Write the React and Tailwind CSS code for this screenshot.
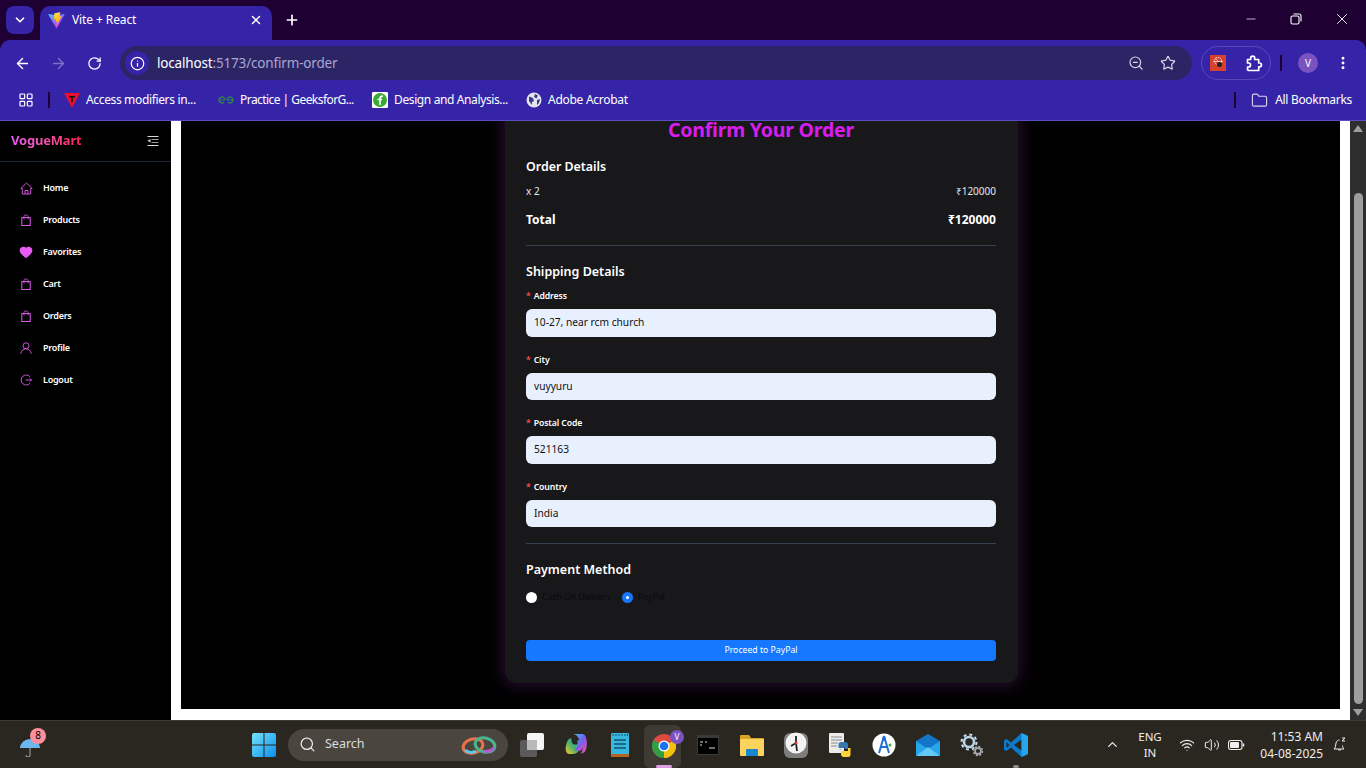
import React from "react";
import { ArrowLeft, ArrowRight, RotateCw, ZoomOut, Star, MoreVertical, ChevronDown, X, Plus, Minus, LayoutGrid, Folder, Info, Heart, Search, ChevronUp, Wifi, Volume2 } from "lucide-react";

const F = { fontFamily: '"Noto Sans", sans-serif' };

function ViteLogo() {
  return (
    <svg width="17" height="17" viewBox="0 0 410 404">
      <defs>
        <linearGradient id="va" x1="6" y1="33" x2="235" y2="344" gradientUnits="userSpaceOnUse">
          <stop stopColor="#41D1FF" />
          <stop offset="1" stopColor="#BD34FE" />
        </linearGradient>
        <linearGradient id="vb" x1="194" y1="8" x2="236" y2="292" gradientUnits="userSpaceOnUse">
          <stop stopColor="#FFEA83" />
          <stop offset=".08" stopColor="#FFDD35" />
          <stop offset="1" stopColor="#FFA800" />
        </linearGradient>
      </defs>
      <path fill="url(#va)" d="M399.6 59.5 215 389.6c-3.8 6.8-13.6 6.9-17.5.1L9.3 59.5C5.1 52.1 11.4 43.2 19.8 44.7l184.8 33c1.2.2 2.4.2 3.6 0l180.9-33c8.3-1.5 14.7 7.3 10.5 14.8Z" />
      <path fill="url(#vb)" d="M292.9 1.6 156.3 28.4c-2.2.4-3.9 2.3-4 4.6l-8.4 142.2c-.2 3.4 2.9 5.9 6.2 5.2l38-8.8c3.6-.8 6.8 2.3 6.1 5.9l-11.3 55.3c-.8 3.7 2.7 6.9 6.3 5.8l23.5-7.1c3.6-1.1 7.1 2.1 6.3 5.8l-18 87.1c-1.1 5.4 6.1 8.4 9.1 3.7l2-3.1 111.4-222.3c1.9-3.7-1.3-8-5.4-7.2l-39.2 7.6c-3.7.7-6.8-2.7-5.8-6.3l25.6-88.7c1-3.6-2.1-7.1-5.8-6.3Z" />
    </svg>
  );
}

function Bookmark({ icon, label, w, text }) {
  return (
    <div className="flex items-center" style={{ width: w }}>
      <div className="w-4 h-4 flex items-center justify-center mr-[6px]">{icon}</div>
      <span className={text}>{label}</span>
    </div>
  );
}

function Chrome() {
  return (
    <div className="shrink-0 bg-[#1f0033]" style={F}>
      <div className="h-10 flex items-end relative">
        <div className="absolute left-[6px] top-[6px] w-7 h-7 rounded-lg bg-[#3524a8] flex items-center justify-center">
          <ChevronDown size={14} strokeWidth={3} className="text-white" />
        </div>
        <div className="ml-10 w-[232px] h-[34px] rounded-t-[10px] bg-[#3524a8] flex items-center pl-2 pr-2 pb-[6px]">
          <ViteLogo />
          <span className="ml-[7px] text-[12px] text-white tracking-[-0.1px]">Vite + React</span>
          <X size={14} strokeWidth={2.5} className="ml-auto mr-[1px] text-white" />
        </div>
        <Plus size={16} strokeWidth={2.5} className="ml-3 mb-3 text-white" />
        <div className="ml-auto flex items-center h-full pr-[15px] pb-[2px] text-white">
          <Minus size={14} strokeWidth={1.2} className="mr-[-1px]" />
          <svg className="ml-[32px]" width="14" height="14" viewBox="0 0 14 14" fill="none" stroke="#fff" strokeWidth="1.1">
            <rect x="2" y="4" width="8" height="8" rx="1.5" />
            <path d="M4.5 2h5.5A2 2 0 0 1 12 4v5.5" />
          </svg>
          <X size={18} strokeWidth={1.2} className="ml-[30px]" />
        </div>
      </div>

      <div className="h-10 bg-[#3524a8] rounded-t-[10px] flex items-center">
        <div className="w-[120px] mt-[6px] flex items-center shrink-0 pl-[14px] text-white">
          <ArrowLeft size={17} strokeWidth={2} />
          <ArrowRight size={17} strokeWidth={2} className="ml-[19px] text-[#7b70c4]" />
          <RotateCw size={15} strokeWidth={2} className="ml-[20px]" />
        </div>
        <div className="w-[1072px] h-[34px] mt-[6px] rounded-full bg-[#2b2566] flex items-center pl-[5px] pr-[16px] shrink-0">
          <div className="w-6 h-6 rounded-full bg-[#3524a8] flex items-center justify-center">
            <Info size={15} className="text-white" strokeWidth={2} />
          </div>
          <span className="ml-2 text-[13.5px] tracking-[-0.17px] text-white">localhost<span className="text-[#aaa6cf]">:5173/confirm-order</span></span>
          <ZoomOut size={16} className="ml-auto text-[#d5d3e8]" strokeWidth={1.8} />
          <Star size={16} className="ml-4 text-[#d5d3e8]" strokeWidth={1.8} />
        </div>
        <div className="ml-[9px] mt-[6px] w-[70px] h-[34px] rounded-full border border-[#5548b8] flex items-center pl-2 shrink-0">
          <svg width="16" height="16" viewBox="0 0 16 16">
            <rect width="16" height="16" fill="#d8402f" />
            <circle cx="8" cy="6" r="3.500" fill="none" stroke="#fff" strokeWidth="0.9" strokeDasharray="1.500 0.800" />
            <path d="M3 6.500h10M5 3 11 9" stroke="#fff" strokeWidth="0.6" />
            <circle cx="9.500" cy="9.500" r="2.500" fill="#222" />
          </svg>
          <svg className="ml-[20px]" width="17" height="17" viewBox="0 0 17 17" fill="none" stroke="#fff" strokeWidth="1.700" strokeLinejoin="round">
            <path d="M1.500 4.500h3.200V3.200a2 2 0 0 1 4 0v1.300h4v3.500h.8a1.900 1.900 0 0 1 0 3.800h-.8v3.700H2.500l-1-.900V12h1a2 2 0 0 0 0-4h-1Z" />
          </svg>
        </div>
        <div className="ml-[9px] mt-[6px] w-[2px] h-4 bg-[#1f0033]" />
        <div className="ml-[16px] mt-[6px] w-5 h-5 rounded-full bg-[#7a53c0] flex items-center justify-center text-[10px] text-white">V</div>
        <MoreVertical size={16} strokeWidth={2.4} className="ml-[17px] mt-[6px] text-white" />
      </div>

      <div className="h-[41px] bg-[#3524a8] border-b border-[#5a4fc0] flex items-center pl-[18px]">
        <LayoutGrid size={16} className="text-white" strokeWidth={1.8} />
        <div className="ml-[14px] w-[2px] h-4 bg-[#1f0033]" />
        <div className="ml-[14px] flex items-center">
          <Bookmark
            w="154px"
            text="text-[12px] text-white whitespace-nowrap tracking-[-0.35px]"
            label="Access modifiers in..."
            icon={
              <svg width="16" height="16" viewBox="0 0 16 16">
                <path d="M0 1h16L8 16Z" fill="#e8112d" />
                <path d="M5 4h6v1.5H8.8V10H7.2V5.5H5Z" fill="#111" />
              </svg>
            }
          />
          <Bookmark
            w="154px"
            text="text-[12px] text-white whitespace-nowrap tracking-[-0.55px]"
            label="Practice | GeeksforG..."
            icon={
              <svg width="16" height="10" viewBox="0 0 16 10" fill="none" stroke="#2f8d46" strokeWidth="1.2">
                <path d="M1 5h6M9 5h6M7 5a3 3 0 1 0-1 2.2M9 5a3 3 0 1 1 1 2.2" />
              </svg>
            }
          />
          <Bookmark
            w="155px"
            text="text-[12px] text-white whitespace-nowrap tracking-[-0.38px]"
            label="Design and Analysis..."
            icon={
              <svg width="16" height="16" viewBox="0 0 16 16">
                <rect width="16" height="16" rx="1" fill="#fff" />
                <circle cx="8" cy="8" r="7" fill="#3aa935" />
                <path d="M8 13V6.5c0-2 1-2.5 3-2.5M5.5 7.5h4.5" stroke="#fff" strokeWidth="1.6" fill="none" />
              </svg>
            }
          />
          <Bookmark
            w="130px"
            text="text-[12px] text-white whitespace-nowrap tracking-[-0.28px] ml-[-1px]"
            label="Adobe Acrobat"
            icon={
              <svg width="16" height="16" viewBox="0 0 16 16" className="ml-[-2px]">
                <circle cx="8" cy="8" r="7.5" fill="#e4e4ee" />
                <path d="M3 4.5 7 6l1 3-2 1v3L3 9ZM9 2l3 1.500-1.500 3L8 5ZM11 8l3-1-1 4-2 2Z" fill="#3a3a8c" />
              </svg>
            }
          />
        </div>
        <div className="ml-auto flex items-center pr-[14px]">
          <div className="w-[2px] h-4 bg-[#1f0033]" />
          <Folder size={17} className="ml-[15px] text-[#d5d3e8]" strokeWidth={1.6} />
          <span className="ml-[7px] text-[12px] text-white tracking-[-0.3px]">All Bookmarks</span>
        </div>
      </div>
    </div>
  );
}

const C = "#e25cf2";

function HomeIcon() {
  return (
    <svg width="13" height="13" viewBox="0 0 13 13" fill="none" stroke={C} strokeWidth="0.9" strokeLinejoin="round">
      <path d="M.8 6.500 6.500 1l5.700 5.500h-1.500V12H2.300V6.500Z" />
      <path d="M5 12V8.500h3V12" />
    </svg>
  );
}
function BagIcon() {
  return (
    <svg width="12" height="12" viewBox="0 0 12 12" fill="none" stroke={C} strokeWidth="1">
      <rect x="1.800" y="3.500" width="8.400" height="8" />
      <path d="M4 5.500V2.200A1.400 1.400 0 0 1 5.400 1h1.200A1.400 1.400 0 0 1 8 2.200v3.300" strokeWidth="0.8" />
    </svg>
  );
}
function UserIcon() {
  return (
    <svg width="12" height="12" viewBox="0 0 12 12" fill="none" stroke={C} strokeWidth="0.9">
      <circle cx="6" cy="3.800" r="3" />
      <path d="M.8 11.800c.3-3 2.400-5 5.200-5s4.900 2 5.200 5" />
    </svg>
  );
}
function LogoutIcon() {
  return (
    <svg width="12" height="12" viewBox="0 0 12 12" fill="none" stroke={C} strokeWidth="0.9">
      <path d="M10.200 3A5 5 0 1 0 10.200 9M5.500 6H11.500M10 4.500 11.500 6 10 7.500" />
    </svg>
  );
}
function MenuIcon() {
  return (
    <svg width="12" height="10" viewBox="0 0 12 10" fill="#d8d8d8">
      <rect x="0.500" y="0" width="11" height="1" />
      <rect x="4.500" y="3" width="7" height="1" fill="#9a9a9a" />
      <rect x="4.500" y="6" width="7" height="1" fill="#9a9a9a" />
      <rect x="0.500" y="9" width="11" height="1" />
      <path d="M3.500 3v3.500L.5 4.800Z" />
    </svg>
  );
}

const NAV = [
  ["Home", <HomeIcon />],
  ["Products", <BagIcon />],
  ["Favorites", <Heart size={14} fill="#e85cf5" className="text-[#e85cf5]" />],
  ["Cart", <BagIcon />],
  ["Orders", <BagIcon />],
  ["Profile", <UserIcon />],
  ["Logout", <LogoutIcon />],
];

function Sidebar() {
  return (
    <aside className="w-[171px] shrink-0 bg-black" style={F}>
      <div className="h-[41px] border-b border-[#1f2937] flex items-center justify-between pl-[11px] pr-[12px]">
        <span className="text-[13px] font-bold bg-gradient-to-r from-[#e85cf5] to-[#ff1f4f] bg-clip-text text-transparent tracking-[-0.2px]">VogueMart</span>
        <MenuIcon />
      </div>
      <nav className="pt-[10px]">
        {NAV.map(([label, icon]) => (
          <div key={label} className="h-8 flex items-center pl-[19px]">
            <div className="w-[14px] flex justify-center">{icon}</div>
            <span className="ml-[10px] text-[9px] font-semibold text-white tracking-[-0.25px]">{label}</span>
          </div>
        ))}
      </nav>
    </aside>
  );
}

function Field({ label, value, className }) {
  return (
    <div className={className}>
      <div className="h-[14px] pt-[2px] flex items-center text-[8.700px] font-semibold text-white tracking-[-0.1px]">
        <span className="text-[#ff4d4f] mr-[3px]">*</span>
        {label}
      </div>
      <div className="mt-[6px] h-[27.500px] rounded-md bg-[#e8f0fe] flex items-center px-2 text-[10.200px] text-[#111]">{value}</div>
    </div>
  );
}

function Card() {
  return (
    <div className="w-[513px] ml-[2px] mb-[26px] rounded-xl bg-[#18181b] shadow-[0_0_16px_3px_rgba(190,70,230,0.2)] pl-[21px] pr-[22px] pt-5 pb-[22px] shrink-0" style={F}>
      <h1 className="h-7 pt-[2px] text-center text-[19.500px] leading-4 font-bold text-[#d81df0] tracking-[-0.22px]">Confirm Your Order</h1>
      <h2 className="mt-[8px] h-5 text-[12.400px] leading-[22px] font-semibold text-white">Order Details</h2>
      <div className="mt-[5px] h-5 flex items-center justify-between text-[10px] text-[#e5e7eb]">
        <span>x 2</span>
        <span>₹120000</span>
      </div>
      <div className="mt-[8px] h-5 pt-[2px] flex items-center justify-between text-[12px] font-bold text-white">
        <span>Total</span>
        <span>₹120000</span>
      </div>
      <div className="mt-[16px] h-px bg-[#374151]" />
      <h2 className="mt-[15px] h-5 text-[12.500px] leading-[22px] font-semibold text-white">Shipping Details</h2>
      <Field label="Address" value="10-27, near rcm church" className="mt-[8px]" />
      <Field label="City" value="vuyyuru" className="mt-[16px]" />
      <Field label="Postal Code" value="521163" className="mt-[16px]" />
      <Field label="Country" value="India" className="mt-[16px]" />
      <div className="mt-[16px] h-px bg-[#374151]" />
      <h2 className="mt-[15px] h-5 text-[12.500px] leading-[22px] font-semibold text-white">Payment Method</h2>
      <div className="mt-[8px] h-5 flex items-center text-[9px] text-[#0b0b0d]">
        <span className="w-[11px] h-[11px] rounded-full bg-white" />
        <span className="ml-[5px] mr-[11px] tracking-[-0.2px]">Cash On Delivery</span>
        <span className="w-[11px] h-[11px] rounded-full border-[4px] border-[#1677ff] bg-white" />
        <span className="ml-[5px] tracking-[-0.2px]">PayPal</span>
      </div>
      <button className="mt-[33px] w-full h-[21px] rounded-[4px] bg-[#1677ff] text-white text-[8.700px] flex items-center justify-center">Proceed to PayPal</button>
    </div>
  );
}

function Scrollbar() {
  return (
    <div className="w-4 shrink-0 bg-[#2e2e2e] flex flex-col items-center py-[4px]">
      <div className="w-0 h-0 border-x-[5px] border-x-transparent border-b-[7px] border-b-[#9e9e9e]" />
      <div className="mt-[61px] w-[9px] flex-1 rounded-full bg-[#9e9e9e]" />
      <div className="mt-[5px] w-0 h-0 border-x-[5px] border-x-transparent border-t-[7px] border-t-[#9e9e9e]" />
    </div>
  );
}

function Cell({ children }) {
  return <div className="relative w-11 h-12 flex items-center justify-center shrink-0">{children}</div>;
}

function Taskbar() {
  return (
    <div className="h-12 shrink-0 bg-[#2a2620] border-t border-[#3f3b35] flex items-center relative" style={F}>
      <div className="w-[252px] shrink-0 pl-5">
        <div className="relative w-5 h-6 flex items-end">
          <svg width="20" height="18" viewBox="0 0 20 18">
            <path d="M0 9A10 9 0 0 1 20 9Z" fill="#6cb8ec" />
            <path d="M10 9v7a2 2 0 0 1-4 0" fill="none" stroke="#8a8a8a" strokeWidth="1.3" />
          </svg>
          <span className="absolute -top-[5px] left-[10px] w-4 h-4 rounded-full bg-[#ff8f9b] text-[10px] text-black flex items-center justify-center">8</span>
        </div>
      </div>
      <svg width="24" height="24" viewBox="0 0 24 24" className="shrink-0">
        <defs>
          <linearGradient id="w" x1="0" y1="0" x2="1" y2="1">
            <stop stopColor="#76e3fb" />
            <stop offset="1" stopColor="#0a8fee" />
          </linearGradient>
        </defs>
        <path d="M0 2a2 2 0 0 1 2-2h9.500v11.500H0ZM12.500 0H22a2 2 0 0 1 2 2v9.500H12.500ZM0 12.500h11.500V24H2a2 2 0 0 1-2-2ZM12.500 12.500H24V22a2 2 0 0 1-2 2h-9.500Z" fill="url(#w)" />
      </svg>
      <div className="ml-[12px] w-[220px] h-8 rounded-full bg-[#4a463f] flex items-center pl-[11px] pr-[10px] shrink-0">
        <Search size={17} className="text-[#e8e8e8]" strokeWidth={1.8} />
        <span className="ml-[9px] text-[12.500px] text-[#dcdcdc]">Search</span>
        <svg className="ml-auto" width="38" height="22" viewBox="0 0 38 22" fill="none" strokeWidth="3">
          <ellipse cx="13" cy="12" rx="10" ry="7" stroke="#e8734a" transform="rotate(-15 13 12)" />
          <ellipse cx="25" cy="11" rx="10" ry="7" stroke="#49b58f" transform="rotate(15 25 11)" />
          <path d="M5 16c3 3 8 3 11 1" stroke="#5cc7e8" />
          <path d="M24 17c3 1 7 0 10-3" stroke="#b65ad0" />
        </svg>
      </div>
      <div className="ml-[2px] flex items-center">
        <Cell>
          <svg width="24" height="24" viewBox="0 0 24 24">
            <rect y="7" width="17" height="17" rx="2" fill="#5a5a5a" />
            <rect x="7" y="0" width="17" height="17" rx="2" fill="#f5f5f5" />
            <rect x="7" y="7" width="10" height="10" fill="#b9b9b9" />
          </svg>
        </Cell>
        <Cell>
          <svg width="23" height="23" viewBox="0 0 22 22">
            <defs>
              <linearGradient id="c1" x1="0" y1="0" x2="1" y2="1">
                <stop stopColor="#35c1f1" />
                <stop offset=".5" stopColor="#7b5cf0" />
                <stop offset="1" stopColor="#f0509a" />
              </linearGradient>
              <linearGradient id="c2" x1="0" y1="1" x2="1" y2="0">
                <stop stopColor="#f9c22e" />
                <stop offset=".5" stopColor="#3fb26f" />
                <stop offset="1" stopColor="#35a6f1" />
              </linearGradient>
            </defs>
            <path d="M6 5C3 5 2 8 1 12s0 8 3 8h4c3 0 5-2 6-5l1-4H9c-3 0-3-6-3-6Z" fill="url(#c2)" />
            <path d="M8 1h8c3 0 4 2 4.500 5s1 8-1.500 12c-1 1-2 1.500-4 1.500 2-2 2-5 1-8-1-4-3-6-4-8-1-1.500-2-2-4-2.500Z" fill="url(#c1)" />
            <path d="M12 7h5l1 5-3 5H9l3-5Z" fill="url(#c1)" />
          </svg>
        </Cell>
        <Cell>
          <svg width="18" height="24" viewBox="0 0 18 24">
            <rect width="18" height="24" rx="1" fill="#38b6e0" />
            <rect y="21" width="18" height="3" fill="#b5651d" />
            <path d="M3 7h12M3 11h12M3 15h12" stroke="#12536e" strokeWidth="1.500" />
            <path d="M2 1v2M5 1v2M8 1v2M11 1v2M14 1v2M16.500 1v2" stroke="#12536e" />
          </svg>
        </Cell>
        <Cell>
          <div className="absolute left-[2px] top-[4px] w-[37px] h-[43px] rounded-md bg-[#3e3b35]" />
          <svg className="relative mt-[3px]" width="24" height="24" viewBox="0 0 24 24">
            <circle cx="12" cy="12" r="12" fill="#dd4b3e" />
            <path d="M12 12 22.400 6A12 12 0 0 1 12 24Z" fill="#f4c20d" />
            <path d="M12 12 12 24A12 12 0 0 1 1.600 6Z" fill="#2f9e44" />
            <circle cx="12" cy="12" r="5.500" fill="#fff" />
            <circle cx="12" cy="12" r="4.300" fill="#1a73e8" />
          </svg>
          <span className="absolute right-[2px] top-[9px] w-[14px] h-[14px] rounded-full bg-[#7a53c0] text-[8px] text-white flex items-center justify-center">V</span>
          <span className="absolute left-[14px] bottom-[1px] w-4 h-[3px] rounded-full bg-[#e0a0e8]" />
        </Cell>
        <Cell>
          <svg width="22" height="20" viewBox="0 0 22 20">
            <rect width="22" height="20" fill="#3a3a3a" />
            <rect x="1" y="3" width="20" height="16" fill="#000" />
            <path d="M3 7h3M3 10h2M8 7h2M12 13h6" stroke="#ddd" strokeWidth="1.200" />
          </svg>
        </Cell>
        <Cell>
          <svg width="24" height="22" viewBox="0 0 24 22">
            <path d="M0 2a1 1 0 0 1 1-1h8l2 3h12a1 1 0 0 1 1 1v2H0Z" fill="#d9a520" />
            <rect y="5" width="24" height="17" rx="1" fill="#fcd35d" />
            <rect x="6" y="15" width="12" height="7" rx="1" fill="#1a86d0" />
          </svg>
        </Cell>
        <Cell>
          <svg width="24" height="26" viewBox="0 0 24 26">
            <rect y="1" width="24" height="25" rx="6" fill="#7d7d7d" />
            <circle cx="12" cy="11" r="10.500" fill="#f2f2f2" />
            <path d="M12 11V4M12 11l-5 3M12 11l1 8" stroke="#222" strokeWidth="1.800" />
            <circle cx="12" cy="11" r="1.500" fill="#d33" />
          </svg>
        </Cell>
        <Cell>
          <svg width="24" height="24" viewBox="0 0 24 24">
            <rect x="1" width="15" height="20" rx="1" fill="#ececec" />
            <path d="M3 4h11M3 7h11M3 10h7M3 13h6" stroke="#888" />
            <path d="M16 9h-3a2.500 2.500 0 0 0-2.500 2.500V15H17v1h-6v0a3 3 0 0 0 3 0h6V12a3 3 0 0 0-3-3Z" fill="#3776ab" />
            <path d="M17 24h3a2.500 2.500 0 0 0 2.500-2.500V15H20v3h-7v3a3 3 0 0 0 4 3Z" fill="#ffd43b" />
          </svg>
        </Cell>
        <Cell>
          <svg width="24" height="24" viewBox="0 0 24 24">
            <circle cx="12" cy="12" r="11.500" fill="#fff" />
            <path d="M12 3 7 20M12 3l5 17M8 14h8" stroke="#1f6fd6" strokeWidth="2" fill="none" />
            <circle cx="12" cy="6" r="2" fill="#1f6fd6" />
            <circle cx="18" cy="12" r="1.500" fill="#3fae49" />
          </svg>
        </Cell>
        <Cell>
          <svg width="24" height="22" viewBox="0 0 24 22">
            <path d="M0 7 12 0l12 7v13a2 2 0 0 1-2 2H2a2 2 0 0 1-2-2Z" fill="#1374c8" />
            <path d="M0 7l12 8 12-8v13a2 2 0 0 1-2 2H2a2 2 0 0 1-2-2Z" fill="#27a5ea" />
            <path d="M0 22l12-9 12 9Z" fill="#62c8f5" />
          </svg>
        </Cell>
        <Cell>
          <svg width="24" height="24" viewBox="0 0 24 24" fill="none">
            <circle cx="9" cy="9" r="7.500" stroke="#c6dff0" strokeWidth="2" strokeDasharray="3 2.900" />
            <circle cx="9" cy="9" r="5" stroke="#b9d4ea" strokeWidth="2.600" />
            <circle cx="18" cy="18" r="4.500" stroke="#a3a8ad" strokeWidth="1.500" strokeDasharray="2 1.500" />
            <circle cx="18" cy="18" r="3" stroke="#a3a8ad" strokeWidth="1.800" />
          </svg>
        </Cell>
        <Cell>
          <svg width="24" height="24" viewBox="0 0 24 24">
            <path d="M17.500 0 24 3v18l-6.500 3L7 14.500l-4.500 3.500L0 16.800V7.200L2.500 6 7 9.500Z" fill="#0a7acc" />
            <path d="M17.500 6.500v11L10 12Z" fill="#2a2620" />
            <path d="M2.500 9v6L5.500 12Z" fill="#2a2620" />
            <path d="M17.500 0 24 3v18l-6.500 3Z" fill="#27a5ea" />
          </svg>
          <span className="absolute bottom-[1px] left-[19px] w-[6px] h-[3px] rounded-full bg-[#8a8a8a]" />
        </Cell>
      </div>
      <div className="ml-auto flex items-center text-[#eee] pr-[19px]">
        <ChevronUp size={15} strokeWidth={2} />
        <div className="ml-[16px] w-7 text-center text-[11.500px] leading-[16px]">
          <div>ENG</div>
          <div>IN</div>
        </div>
        <Wifi size={16} className="ml-[15px]" strokeWidth={1.700} />
        <Volume2 size={16} className="ml-[9px]" strokeWidth={1.500} />
        <svg className="ml-[8px]" width="17" height="12" viewBox="0 0 17 12" fill="none" stroke="#eee">
          <rect x="0.500" y="1.500" width="13.500" height="9" rx="2.200" strokeWidth="1.100" />
          <rect x="2" y="3" width="9" height="6" rx="1" fill="#eee" stroke="none" />
          <path d="M15.500 4.500v3" strokeWidth="1.500" />
        </svg>
        <div className="ml-[14px] w-[64px] text-right text-[12px] leading-[17px] whitespace-nowrap">
          <div>11:53 AM</div>
          <div>04-08-2025</div>
        </div>
        <svg className="ml-[10px]" width="14" height="16" viewBox="0 0 14 16" fill="none" stroke="#eee" strokeWidth="1">
          <path d="M1 12c1.500-1 1.500-3 2-6 .5-2 2-3 3.500-3M1 12h10c-1-.8-1.300-2-1.500-3.500M5 12.500a2 2 0 0 0 3 0" />
          <path d="M9 1h3l-3 3h3" />
        </svg>
      </div>
    </div>
  );
}

export default function App() {
  return (
    <div className="w-screen h-screen overflow-hidden flex flex-col bg-white">
      <Chrome />
      <div className="flex-1 min-h-0 flex">
        <Sidebar />
        <div className="flex-1 min-w-0 bg-white pl-[10px] pr-[10px] pb-[11px] flex">
          <main className="flex-1 min-w-0 bg-black flex flex-col justify-end items-center overflow-hidden">
            <Card />
          </main>
        </div>
        <Scrollbar />
      </div>
      <Taskbar />
    </div>
  );
}
